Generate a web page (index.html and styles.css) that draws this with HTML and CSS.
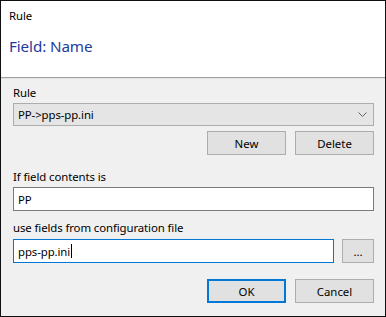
FILE: index.html
```html
<!DOCTYPE html>
<html>
<head>
<meta charset="utf-8">
<link rel="stylesheet" href="styles.css">
</head>
<body>
<div class="dialog">
  <div class="header">
    <div class="caption">Rule</div>
    <div class="instruction">Field: Name</div>
  </div>
  <div class="content">
    <div class="label first">Rule</div>
    <div class="combo">
      <span>PP-&gt;pps-pp.ini</span>
      <svg class="chev" width="9" height="5" viewBox="0 0 9 5"><path d="M0.5 0.5 L4.5 4.5 L8.5 0.5" fill="none" stroke="#606060" stroke-width="1"/></svg>
    </div>
    <div class="row buttons-top">
      <button class="btn">New</button>
      <button class="btn">Delete</button>
    </div>
    <div class="label second">If field contents is</div>
    <div class="textbox">PP</div>
    <div class="label third">use fields from configuration file</div>
    <div class="row file-row">
      <div class="textbox focused">pps-pp.ini<span class="caret"></span></div>
      <button class="btn small">...</button>
    </div>
    <div class="row buttons-bottom">
      <button class="btn default">OK</button>
      <button class="btn">Cancel</button>
    </div>
  </div>
</div>
</body>
</html>
```
FILE: styles.css
```css
* { box-sizing: border-box; }
html, body { margin: 0; padding: 0; background: #f0f0f0; }
body { font-family: "Noto Sans", "Open Sans", sans-serif; font-size: 11.4px; letter-spacing: -0.1px; color: #000; }
.dialog {
  width: 386px; height: 317px;
  border: 1px solid #101010;
  background: #f0f0f0;
  display: flex; flex-direction: column;
}
.header {
  background: #fff;
  height: 77px;
  border-bottom: 1px solid #a0a0a0;
  padding: 6px 8px 0 8px;
}
.caption { height: 18px; line-height: 18px; }
.instruction { margin-top: 10px; font-size: 15.2px; line-height: 22px; color: #1c3b9c; }
.content {
  border-top: 1px solid #e3e3e3;
  padding: 6px 11px 0 12px;
  display: flex; flex-direction: column;
}
.label { height: 16px; line-height: 16px; }
.label.second { margin-top: 14px; }
.label.third { margin-top: 9px; }
.combo {
  margin-top: 2px;
  height: 23px;
  background: #e5e5e5;
  border: 1px solid #adadad;
  display: flex; align-items: center; justify-content: space-between;
  padding: 0 6px 0 4px;
}
.row { display: flex; justify-content: flex-end; gap: 9px; }
.btn {
  font: inherit; color: #000;
  width: 79px; height: 24px;
  background: #e1e1e1;
  border: 1px solid #adadad;
  padding: 0;
}
.buttons-top { margin-top: 5px; }
.textbox {
  margin-top: 2px;
  height: 24px;
  background: #fff;
  border: 1px solid #7a7a7a;
  padding: 0 4px;
  display: flex; align-items: center;
}
.file-row { margin-top: 3px; gap: 8px; }
.file-row .textbox { margin-top: 0; flex: 1; border-color: #0078d7; }
.btn.small { width: 32px; height: 24px; }
.caret { display: inline-block; width: 1px; height: 14px; background: #000; margin-left: 1px; }
.buttons-bottom { margin-top: 16px; }
.btn.default { border: 2px solid #0078d7; }
```
